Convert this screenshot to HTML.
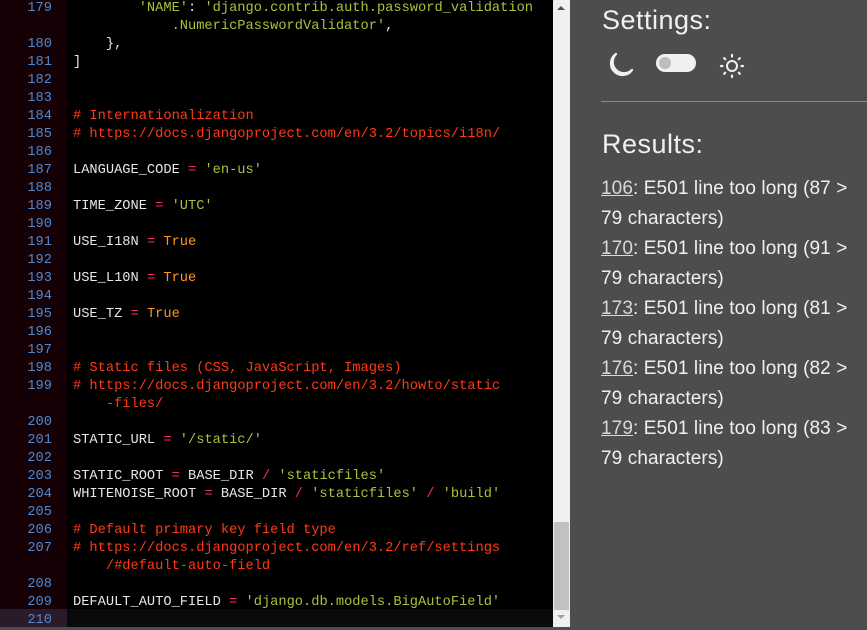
<!DOCTYPE html>
<html><head><meta charset="utf-8"><style>
*{margin:0;padding:0;box-sizing:border-box}
body{width:867px;height:627px;overflow:hidden;background:#4d4d4d;position:relative;font-family:"Liberation Sans",sans-serif}
#gut{position:absolute;left:0;top:0;width:67px;height:627px;background:#150006}
#code{position:absolute;left:67px;top:0;width:486px;height:627px;background:#000}
#act{position:absolute;left:0;top:609px;width:67px;height:18px;background:#2a1a2a}
#actc{position:absolute;left:67px;top:609px;width:486px;height:18px;background:#0a0a0a}
#sb{position:absolute;left:553px;top:0;width:17px;height:627px;background:#f0f0f0}
#thumb{position:absolute;left:554px;top:522px;width:15px;height:88px;background:#c1c1c1}
.ln,.cd{position:absolute;top:0px;font-family:"Liberation Mono",monospace;font-size:13.7px;line-height:18px;white-space:pre}
.ln{left:0;width:52px;text-align:right;color:#4f88cc}
.cd{left:73px;color:#e6e6e6}
.c{color:#ff3a14}.s{color:#a8c23a}.o{color:#f92672}.k{color:#fd971f}
#right{position:absolute;left:570px;top:0;width:297px;height:627px;color:#f0f0f0}
h1{position:absolute;left:32px;top:5px;font-weight:normal;font-size:27px;letter-spacing:.5px}
h2{position:absolute;left:32px;top:129px;font-weight:normal;font-size:27px;letter-spacing:.5px}
#hr{position:absolute;left:31px;top:101px;width:266px;height:1px;background:#8a8a8a}
#res{position:absolute;left:31px;top:174px;font-size:19px;line-height:30px;width:266px;white-space:nowrap;letter-spacing:.1px}
#res u{color:#d8d8d8;text-decoration-color:#d8d8d8}
</style></head><body>
<div id="gut"></div><div id="code"></div><div id="act"></div><div id="actc"></div>
<div id="sb"></div><div id="thumb"></div>
<svg style="position:absolute;left:555px;top:4px" width="12" height="8"><path d="M2 6L6 2L10 6Z" fill="#505050"/></svg>
<svg style="position:absolute;left:555px;top:613px" width="12" height="8"><path d="M2 2L6 6L10 2Z" fill="#a0a0a0"/></svg>
<div class="ln">179

180
181
182
183
184
185
186
187
188
189
190
191
192
193
194
195
196
197
198
199

200
201
202
203
204
205
206
207

208
209
210</div>
<div class="cd">        <span class="s">'NAME'</span>: <span class="s">'django.contrib.auth.password_validation</span>
<span class="s">            .NumericPasswordValidator'</span>,
    },
]


<span class="c"># Internationalization</span>
<span class="c"># https://docs.djangoproject.com/en/3.2/topics/i18n/</span>

LANGUAGE_CODE <span class="o">=</span> <span class="s">'en-us'</span>

TIME_ZONE <span class="o">=</span> <span class="s">'UTC'</span>

USE_I18N <span class="o">=</span> <span class="k">True</span>

USE_L10N <span class="o">=</span> <span class="k">True</span>

USE_TZ <span class="o">=</span> <span class="k">True</span>


<span class="c"># Static files (CSS, JavaScript, Images)</span>
<span class="c"># https://docs.djangoproject.com/en/3.2/howto/static</span>
<span class="c">    -files/</span>

STATIC_URL <span class="o">=</span> <span class="s">'/static/'</span>

STATIC_ROOT <span class="o">=</span> BASE_DIR <span class="o">/</span> <span class="s">'staticfiles'</span>
WHITENOISE_ROOT <span class="o">=</span> BASE_DIR <span class="o">/</span> <span class="s">'staticfiles'</span> <span class="o">/</span> <span class="s">'build'</span>

<span class="c"># Default primary key field type</span>
<span class="c"># https://docs.djangoproject.com/en/3.2/ref/settings</span>
<span class="c">    /#default-auto-field</span>

DEFAULT_AUTO_FIELD <span class="o">=</span> <span class="s">'django.db.models.BigAutoField'</span>
</div>
<div id="right">
<h1>Settings:</h1>
<svg style="position:absolute;left:35px;top:50px" width="30" height="30" viewBox="0 0 30 30"><path d="M11 4A11.5 11.5 0 1 0 27 20A9 9 0 0 1 11 4Z" fill="none" stroke="#f0f0f0" stroke-width="2.3" stroke-linejoin="round"/></svg>
<div style="position:absolute;left:86px;top:54px;width:40px;height:18px;border-radius:9px;background:#f0f0f0"></div>
<div style="position:absolute;left:89px;top:57px;width:12px;height:12px;border-radius:6px;background:#bdbdbd"></div>
<svg style="position:absolute;left:148px;top:52px" width="28" height="28" viewBox="0 0 28 28"><circle cx="14" cy="14" r="5" fill="none" stroke="#f0f0f0" stroke-width="2"/><g stroke="#f0f0f0" stroke-width="2.2" stroke-linecap="round"><path d="M14 3v1.5M14 23.5v1.5M3 14h1.5M23.5 14h1.5M6.2 6.2l1 1M20.8 20.8l1 1M6.2 21.8l1-1M20.8 7.2l1-1"/></g></svg>
<div id="hr"></div>
<h2>Results:</h2>
<div id="res">
<u>106</u>: E501 line too long (87 &gt;<br>79 characters)<br>
<u>170</u>: E501 line too long (91 &gt;<br>79 characters)<br>
<u>173</u>: E501 line too long (81 &gt;<br>79 characters)<br>
<u>176</u>: E501 line too long (82 &gt;<br>79 characters)<br>
<u>179</u>: E501 line too long (83 &gt;<br>79 characters)
</div>
</div>
</body></html>
